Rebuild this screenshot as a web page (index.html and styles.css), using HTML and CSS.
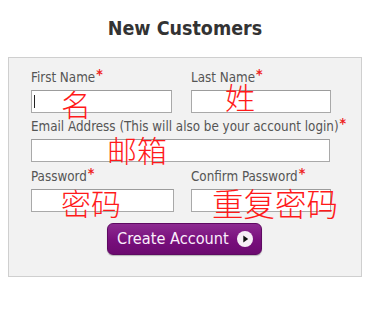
FILE: index.html
```html
<!DOCTYPE html>
<html>
<head>
<meta charset="utf-8">
<link rel="stylesheet" href="styles.css">
</head>
<body>
<div class="page">
  <h2 class="title">New Customers</h2>
  <div class="panel">
    <div class="row">
      <div class="field">
        <label class="label">First Name<span class="req">*</span></label>
        <div class="input input-half"><span class="caret"></span></div>
      </div>
      <div class="field">
        <label class="label">Last Name<span class="req">*</span></label>
        <div class="input input-half2"></div>
      </div>
    </div>
    <div class="row row-email">
      <div class="field">
        <label class="label">Email Address (This will also be your account login)<span class="req">*</span></label>
        <div class="input input-full"></div>
      </div>
    </div>
    <div class="row row-pass">
      <div class="field">
        <label class="label">Password<span class="req">*</span></label>
        <div class="input input-pass"></div>
      </div>
      <div class="field">
        <label class="label">Confirm Password<span class="req">*</span></label>
        <div class="input input-half2"></div>
      </div>
    </div>
    <div class="actions">
      <button class="btn">
        <span class="btn-text">Create Account</span>
        <span class="btn-icon">
          <svg width="16" height="16" viewBox="0 0 16 16"><circle cx="8" cy="8" r="8" fill="#f6eef6"/><path d="M6.3 4.6 L11.2 8 L6.3 11.4 Z" fill="#111"/></svg>
        </span>
      </button>
    </div>
  </div>
  <span class="note note-first">名</span>
  <span class="note note-last">姓</span>
  <span class="note note-email">邮箱</span>
  <span class="note note-pass">密码</span>
  <span class="note note-confirm">重复密码</span>
</div>
</body>
</html>
```

FILE: styles.css
```css
html, body {
  margin: 0;
  padding: 0;
  background: #ffffff;
}
.page {
  position: relative;
  width: 370px;
  height: 311px;
  padding-top: 17px;
  box-sizing: border-box;
  font-family: "DejaVu Sans Condensed", "DejaVu Sans", sans-serif;
  font-stretch: semi-condensed;
}
.title {
  margin: 0 0 16px 0;
  height: 24px;
  line-height: 24px;
  font-size: 19.5px;
  font-weight: bold;
  color: #333333;
  text-align: center;
}
.panel {
  margin: 0 8px;
  width: 354px;
  box-sizing: border-box;
  border: 1px solid #cfcfcf;
  background: #f2f2f2;
  padding: 12px 0 21px 22px;
}
.row {
  display: grid;
  grid-template-columns: 160px auto;
}
.row-email { margin-top: 6px; }
.row-pass { margin-top: 7px; }
.field {
  display: flex;
  flex-direction: column;
}
.label {
  display: block;
  font-size: 13.3px;
  line-height: 14px;
  height: 14px;
  color: #555555;
  white-space: nowrap;
}
.req {
  color: #ee2222;
  font-weight: bold;
  font-size: 14px;
  position: relative;
  top: -3px;
  margin-left: 1px;
}
.input {
  margin-top: 6px;
  height: 23px;
  box-sizing: border-box;
  background: #ffffff;
  border: 1px solid #a9a9a9;
  border-top-color: #9c9c9c;
  position: relative;
}
.input-half { width: 141px; }
.input-half2 { width: 140px; }
.input-full { width: 299px; }
.input-pass { width: 143px; }
.caret {
  position: absolute;
  left: 2px;
  top: 4px;
  width: 1px;
  height: 13px;
  background: #222;
}
.actions {
  margin-top: 11px;
  display: flex;
  padding-left: 76px;
}
.btn {
  width: 155px;
  height: 32px;
  box-sizing: border-box;
  border: 1px solid #5e0a62;
  border-radius: 6px;
  background: linear-gradient(#8d2b91, #780f7c 55%, #6c0a70);
  box-shadow: 0 1px 1px rgba(0,0,0,0.25);
  display: flex;
  align-items: center;
  padding: 0 0 0 9px;
  font-family: inherit;
  font-stretch: semi-condensed;
  cursor: pointer;
}
.btn-text {
  color: #fbeefb;
  font-size: 16.2px;
  line-height: 18px;
}
.btn-icon {
  margin-left: 8px;
  width: 16px;
  height: 16px;
  display: flex;
}
.note {
  position: absolute;
  font-family: "Noto Sans CJK SC", sans-serif;
  font-weight: 300;
  font-size: 30px;
  line-height: 30px;
  color: #ff1a1a;
  white-space: nowrap;
}
.note-first { left: 61px; top: 88px; }
.note-last { left: 225px; top: 81px; }
.note-email { left: 107px; top: 134px; }
.note-pass { left: 61px; top: 187px; }
.note-confirm { left: 212px; top: 187px; font-size: 31.5px; }
```
